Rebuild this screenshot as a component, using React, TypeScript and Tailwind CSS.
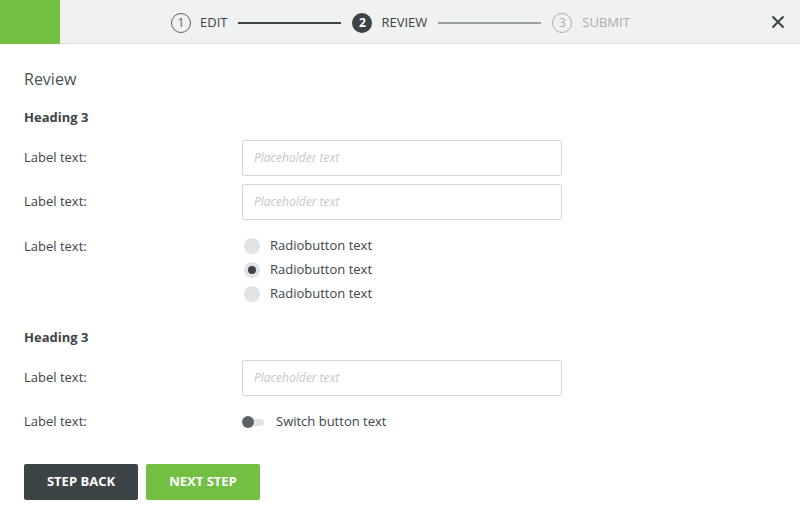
import React from "react";

const font = { fontFamily: '"Open Sans", "Noto Sans", sans-serif' };

function Input() {
  return (
    <div className="w-[320px] h-[36px] border border-[#d5d7d8] rounded-[2px] flex items-center px-[11px] text-[12px] italic text-[#c4c7c9] bg-white">
      Placeholder text
    </div>
  );
}

function Radio({ checked }: { checked?: boolean }) {
  return (
    <div className="flex items-center h-[24px]">
      <div className="w-[16px] h-[16px] rounded-full bg-[#e2e3e4] flex items-center justify-center ml-[2px]">
        {checked && <div className="w-[8px] h-[8px] rounded-full bg-[#3d4448]" />}
      </div>
      <span className="ml-[10px] text-[13px] text-[#3d4448]">Radiobutton text</span>
    </div>
  );
}

export default function App() {
  return (
    <div className="w-[800px] h-[524px] bg-white relative overflow-hidden" style={font}>
      <div className="h-[44px] bg-[#f0f1f1] border-b border-[#e0e2e3] flex items-center">
        <div className="w-[60px] h-[44px] bg-[#72bf44] -mb-px self-start" />
        <div className="flex items-center ml-[111px] mt-[2px]">
          <div className="w-[20px] h-[20px] rounded-full border border-[#5a6266] flex items-center justify-center text-[12px] text-[#5a6266]">1</div>
          <span className="ml-[9px] text-[13px] text-[#3d4448]">EDIT</span>
          <div className="ml-[11px] w-[103px] h-[2px] bg-[#3d4448]" />
          <div className="ml-[11px] w-[20px] h-[20px] rounded-full bg-[#3d4448] flex items-center justify-center text-[12px] font-bold text-white">2</div>
          <span className="ml-[9px] text-[13px] text-[#3d4448]">REVIEW</span>
          <div className="ml-[11px] w-[103px] h-[2px] bg-[#99a0a2]" />
          <div className="ml-[11px] w-[20px] h-[20px] rounded-full border border-[#a9aeb0] flex items-center justify-center text-[12px] text-[#a9aeb0]">3</div>
          <span className="ml-[10px] text-[13px] text-[#a9aeb0]">SUBMIT</span>
        </div>
        <div className="ml-auto mr-[15px] w-[14px] h-[14px] mt-[1px]">
          <svg width="14" height="14" viewBox="0 0 14 14">
            <path d="M1.5 1.5 L12.5 12.5 M12.5 1.5 L1.5 12.5" stroke="#3d4448" strokeWidth="2" />
          </svg>
        </div>
      </div>

      <div className="px-[24px] flex flex-col text-[#3d4448]">
        <div className="mt-[24px] h-[22px] leading-[22px] text-[16px] text-[#4a5155]">Review</div>
        <div className="mt-[18px] h-[18px] leading-[18px] text-[13px] font-bold">Heading 3</div>
        <div className="mt-[14px] flex items-center">
          <div className="w-[218px] text-[13px]">Label text:</div>
          <Input />
        </div>
        <div className="mt-[8px] flex items-center">
          <div className="w-[218px] text-[13px]">Label text:</div>
          <Input />
        </div>
        <div className="mt-[14px] flex items-start">
          <div className="w-[218px] text-[13px] h-[24px] leading-[24px]">Label text:</div>
          <div className="flex flex-col">
            <Radio />
            <Radio checked />
            <Radio />
          </div>
        </div>
        <div className="mt-[22px] h-[18px] leading-[18px] text-[13px] font-bold">Heading 3</div>
        <div className="mt-[14px] flex items-center">
          <div className="w-[218px] text-[13px]">Label text:</div>
          <Input />
        </div>
        <div className="mt-[14px] flex items-center h-[24px]">
          <div className="w-[218px] text-[13px]">Label text:</div>
          <div className="flex items-center">
            <div className="relative w-[22px] h-[12px] flex items-center">
              <div className="absolute left-[8px] right-0 h-[7px] rounded-full bg-[#e2e3e4]" />
              <div className="absolute left-0 w-[12px] h-[12px] rounded-full bg-[#5a6266]" />
            </div>
            <span className="ml-[12px] text-[13px]">Switch button text</span>
          </div>
        </div>
        <div className="mt-[30px] flex gap-[8px]">
          <button className="w-[114px] h-[36px] rounded-[2px] bg-[#3d4448] text-white text-[13px] font-bold">STEP BACK</button>
          <button className="w-[114px] h-[36px] rounded-[2px] bg-[#72bf44] text-white text-[13px] font-bold">NEXT STEP</button>
        </div>
      </div>
    </div>
  );
}
